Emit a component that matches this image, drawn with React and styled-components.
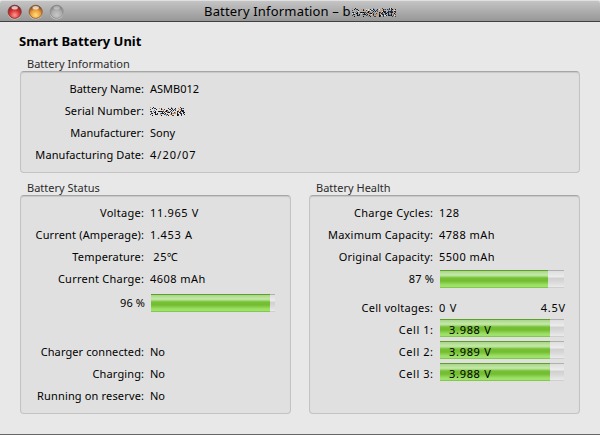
import React from "react";
import styled, { createGlobalStyle } from "styled-components";

const Global = createGlobalStyle`
  * { box-sizing: border-box; }
  body { margin: 0; background: #e8e8e8; font-family: "Noto Sans", "Open Sans", sans-serif; font-size: 11px; color: #000; }
`;

const Window = styled.div`
  width: 600px; height: 435px; display: flex; flex-direction: column;
  background: #e8e8e8; border-bottom: 1px solid #666; overflow: hidden;
`;
const TitleBar = styled.header`
  height: 22px; flex: none; display: flex; align-items: center;
  background: linear-gradient(#e0e0e0 0 1px, #c4c4c4 1px, #979797 21px);
  border-bottom: 1px solid #404040; border-radius: 4px 4px 0 0;
`;
const Lights = styled.div`
  width: 204px; height: 21px; padding-left: 7px; display: flex; gap: 6px; align-items: center;
`;
const LightIcon = styled.svg`display: block; margin-top: 2px;`;
const Title = styled.h1`
  margin: 1px 0 0; font-size: 13px; line-height: 18px; font-weight: 400; white-space: pre;
  letter-spacing: 0.18px; display: flex; align-items: center;
`;
const Heading = styled.h2`
  margin: 10px 0 0 19px; font-size: 13px; line-height: 18px; font-weight: 700; white-space: nowrap;
`;
const Caption = styled.div`
  height: 16px; margin-left: 7px; line-height: 18px; color: #2b2b2b; white-space: nowrap;
`;
const Panel = styled.div`
  height: ${(p) => p.$height}px; background: #e0e0e0; border: 1px solid #c3c3c3; border-top-color: #a6a6a6;
  border-radius: 4px; box-shadow: inset 0 1px 1px #c8c8c8;
  padding-top: 6px;
`;
const Body = styled.main`padding: 5px 20px 0;`;
const Columns = styled.div`display: grid; grid-template-columns: 271px 271px; gap: 18px; margin-top: 6px;`;
const Row = styled.div`
  display: grid; grid-template-columns: ${(p) => p.$label || 123}px 1fr; column-gap: ${(p) => p.$gap || 6}px;
  height: 22px; align-items: center; line-height: 16px; margin-top: ${(p) => p.$top || 0}px;
`;
const Label = styled.div`
  display: flex; justify-content: flex-end; white-space: nowrap;
  letter-spacing: ${(p) => p.$track || 0}px; margin-right: -${(p) => p.$track || 0}px;
`;
const Value = styled.div`white-space: pre; letter-spacing: ${(p) => p.$track || 0}px;`;
const Scale = styled.div`width: 127px; display: flex; justify-content: space-between; letter-spacing: 0.8px;`;
const Track = styled.div`
  width: 124px; height: 18px; margin-bottom: ${(p) => (p.$raised ? 4 : 0)}px;
  background: linear-gradient(#b0b0b0 0 1px, #dedede 1px, #ececec 7px, #d0d0d0 8px, #d6d6d6 11px, #eaeaea 17px, #cfcfcf 17px);
`;
const Fill = styled.div`
  width: ${(p) => p.$width}px; height: 18px; padding-left: 9px; line-height: 22px; white-space: nowrap; letter-spacing: 0.7px;
  background: linear-gradient(#609f2c 0 1px, #a8d689 1px, #c5e9a8 5px, #b2df90 6px, #75c034 8px, #74bd31 11px, #9de068 15px, #a0e26c 17px, #83c94c 17px);
`;
const Pixels = styled.svg`display: block;`;
const TitleMark = styled.span`margin: 2px 0 0 1px;`;

const tones = {
  red: ["#782d28", "#d83030", "#ff9a95"],
  amber: ["#85512b", "#e99b39", "#ffe179"],
  gray: ["#858585", "#adadad", "#c8c8c8"],
};

function Light({ tone }) {
  const [rim, mid, glow] = tones[tone];
  return (
    <LightIcon width="15" height="16" viewBox="0 0 15 16">
      <defs>
        <radialGradient id={tone} cx=".5" cy=".75" r=".65">
          <stop offset="0" stopColor={glow} /><stop offset=".6" stopColor={mid} /><stop offset="1" stopColor={rim} />
        </radialGradient>
      </defs>
      <circle cx="7.7" cy="8.6" r="6.9" fill="#d2d2d2" />
      <circle cx="7.7" cy="7.8" r="6.6" fill={`url(#${tone})`} stroke={rim} strokeWidth=".8" />
      <ellipse cx="7.7" cy="3.7" rx="3.2" ry="1.8" fill="#fff" opacity={tone === "gray" ? 0.35 : 0.7} />
    </LightIcon>
  );
}

const inks = ["#090909", "#162848", "#1b1b1b", "#6b3a24", "#5f86ad", "#cf925c", "#e2e0dc", "#3d3d3d"];

function Scribble({ width, height }) {
  const dots = [];
  let seed = 7919;
  const next = () => (seed = (seed * 16807) % 2147483647) / 2147483647;
  for (let x = 0; x < width; x++)
    for (let y = 0; y < height; y++) {
      const edge = y === 0 || y === height - 1;
      const gap = x % 9 === 8;
      if (next() < (edge || gap ? 0.2 : 0.58))
        dots.push(<rect key={`${x}-${y}`} x={x} y={y} width="1" height="1" fill={inks[Math.floor(next() * inks.length)]} />);
    }
  return <Pixels width={width} height={height} shapeRendering="crispEdges">{dots}</Pixels>;
}

const Meter = ({ width, raised, children }) => <Track $raised={raised}><Fill $width={width}>{children}</Fill></Track>;

const Field = ({ label, value, lt, vt, top }) => (
  <Row $top={top}>
    <Label $track={lt}>{label}</Label>
    <Value $track={vt}>{value}</Value>
  </Row>
);

export default function App() {
  return (
    <>
      <Global />
      <Window>
        <TitleBar>
          <Lights><Light tone="red" /><Light tone="amber" /><Light tone="gray" /></Lights>
          <Title><span>Battery Information – b</span><TitleMark><Scribble width={44} height={9} /></TitleMark></Title>
        </TitleBar>
        <Heading>Smart Battery Unit</Heading>
        <Body>
          <Caption>Battery Information</Caption>
          <Panel $height={102}>
            <Field label="Battery Name:" value="ASMB012" />
            <Field label="Serial Number:" lt={0.15} value={<Scribble width={35} height={9} />} />
            <Field label="Manufacturer:" value="Sony" />
            <Field label="Manufacturing Date:" lt={0.1} value="4/20/07" vt={1} />
          </Panel>
          <Columns>
            <section>
              <Caption>Battery Status</Caption>
              <Panel $height={219}>
                <Field label="Voltage:" lt={0.3} value="11.965 V" vt={0.65} />
                <Field label="Current (Amperage):" lt={0.15} value="1.453 A" vt={0.65} />
                <Field label="Temperature:" lt={0.2} value=" 25℃" vt={0.5} />
                <Field label="Current Charge:" lt={0.24} value="4608 mAh" vt={0.45} />
                <Row $label={124} $top={2}><Label $track={0.15}>96 %</Label><Meter width={119} /></Row>
                <Field label="Charger connected:" lt={0.1} value="No" top={27} />
                <Field label="Charging:" lt={0.12} value="No" />
                <Field label="Running on reserve:" lt={0.16} value="No" />
              </Panel>
            </section>
            <section>
              <Caption>Battery Health</Caption>
              <Panel $height={219}>
                <Field label="Charge Cycles:" lt={0.28} value="128" vt={0.6} />
                <Field label="Maximum Capacity:" lt={0.2} value="4788 mAh" vt={0.5} />
                <Field label="Original Capacity:" lt={0.2} value="5500 mAh" vt={0.5} />
                <Row $label={124}><Label $track={0.2}>87 %</Label><Meter width={108} /></Row>
                <Row $top={7}><Label $track={0.26}>Cell voltages:</Label><Scale><span>0 V</span><span>4.5V</span></Scale></Row>
                {["3.988 V", "3.989 V", "3.988 V"].map((v, i) => (
                  <Row key={i} $gap={7}><Label $track={0.55}>{`Cell ${i + 1}:`}</Label><Meter width={110} raised>{v}</Meter></Row>
                ))}
              </Panel>
            </section>
          </Columns>
        </Body>
      </Window>
    </>
  );
}
